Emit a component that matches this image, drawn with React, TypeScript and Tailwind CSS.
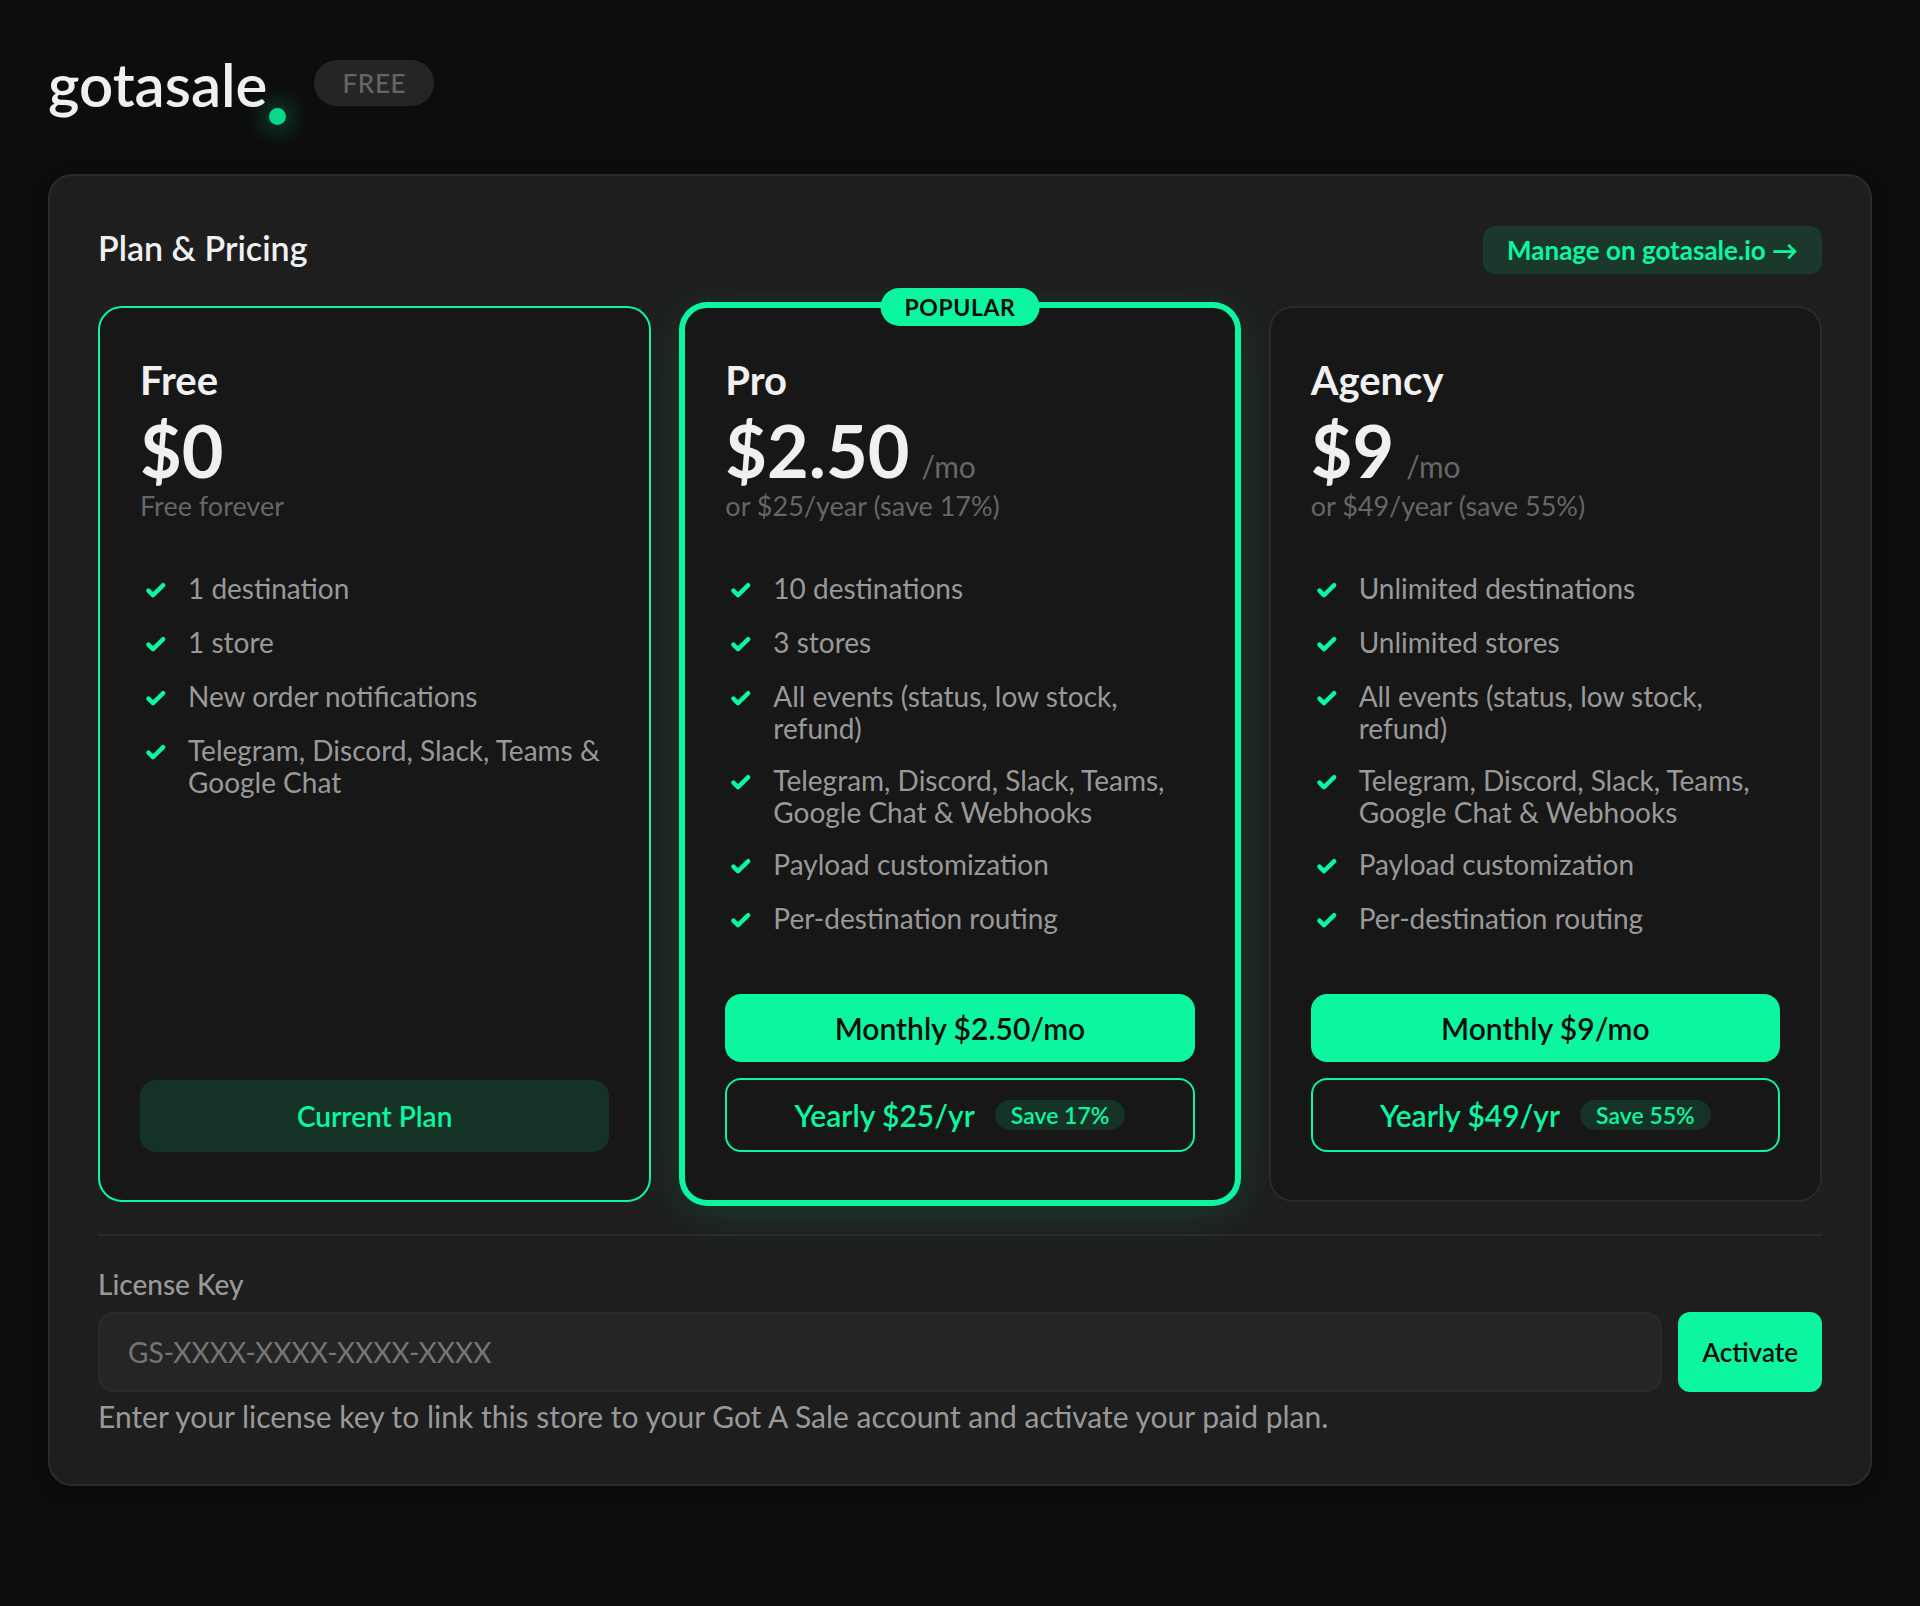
import clsx from "clsx";

type Plan = {
  name: string;
  price: string;
  period?: string;
  note: string;
  features: string[];
  monthly?: string;
  yearly?: string;
  save?: string;
  current?: boolean;
  popular?: boolean;
};

const paidFeatures = [
  "All events (status, low stock, refund)",
  "Telegram, Discord, Slack, Teams, Google Chat & Webhooks",
  "Payload customization",
  "Per-destination routing",
];

const plans: Plan[] = [
  {
    name: "Free",
    price: "$0",
    note: "Free forever",
    features: [
      "1 destination",
      "1 store",
      "New order notifications",
      "Telegram, Discord, Slack, Teams & Google Chat",
    ],
    current: true,
  },
  {
    name: "Pro",
    price: "$2.50",
    period: "/mo",
    note: "or $25/year (save 17%)",
    features: ["10 destinations", "3 stores", ...paidFeatures],
    monthly: "Monthly $2.50/mo",
    yearly: "Yearly $25/yr",
    save: "Save 17%",
    popular: true,
  },
  {
    name: "Agency",
    price: "$9",
    period: "/mo",
    note: "or $49/year (save 55%)",
    features: ["Unlimited destinations", "Unlimited stores", ...paidFeatures],
    monthly: "Monthly $9/mo",
    yearly: "Yearly $49/yr",
    save: "Save 55%",
  },
];

function Check() {
  return (
    <svg viewBox="0 0 32 34" className="w-8 h-[34px] shrink-0" fill="none" aria-hidden="true">
      <path
        d="M8.4 18.6 L13 23.1 L23.2 13.2"
        stroke="#0cf6a0"
        strokeWidth="4.4"
        strokeLinecap="round"
        strokeLinejoin="round"
      />
    </svg>
  );
}

function PlanCard({ plan }: { plan: Plan }) {
  return (
    <div
      className={clsx(
        "relative flex flex-col rounded-3xl border-2 bg-[#171717] px-10 py-12",
        plan.current || plan.popular ? "border-[#0cf6a0]" : "border-[#2a2a2a]",
        plan.popular && "shadow-[0_0_0_4px_#0cf6a0,0_8px_48px_rgba(12,246,160,0.15)]"
      )}
    >
      {plan.popular && (
        <span className="absolute -top-5 left-1/2 -translate-x-1/2 rounded-[20px] bg-[#0cf6a0] px-6 text-[23px] leading-[38px] font-bold tracking-wide text-[#0d0d0d]">
          POPULAR
        </span>
      )}
      <h3 className="mb-1 text-[40px] leading-[48px] font-bold text-[#f0f0f0]">{plan.name}</h3>
      <div className="flex items-baseline gap-3 leading-none">
        <span className="text-[72px] leading-[84px] font-bold text-[#f0f0f0]">{plan.price}</span>
        {plan.period && <span className="text-[30px] text-[#666]">{plan.period}</span>}
      </div>
      <p className="text-[27px] leading-[28px] text-[#666]">{plan.note}</p>

      <ul className="mt-[52px] mb-[58px] flex-1 space-y-5">
        {plan.features.map((f) => (
          <li key={f} className="flex min-h-[34px] items-start gap-4 text-[28px] leading-8 text-[#999]">
            <Check />
            <span>{f}</span>
          </li>
        ))}
      </ul>

      {plan.current ? (
        <button className="h-[72px] rounded-2xl bg-[#0cf6a0]/12 text-[28px] font-semibold text-[#0cf6a0]">
          Current Plan
        </button>
      ) : (
        <div className="flex flex-col gap-4">
          <button className="h-[68px] rounded-2xl bg-[#0cf6a0] text-[30px] font-semibold text-[#0d0d0d]">
            {plan.monthly}
          </button>
          <button className="flex h-[74px] items-center justify-center gap-5 rounded-2xl border-2 border-[#0cf6a0] text-[30px] font-semibold text-[#0cf6a0]">
            {plan.yearly}
            <span className="rounded-2xl bg-[#0cf6a0]/12 px-4 text-[23px] leading-[30px]">
              {plan.save}
            </span>
          </button>
        </div>
      )}
    </div>
  );
}

export default function App() {
  return (
    <div className="min-h-screen bg-[#0d0d0d] px-12 pt-[60px] pb-30 font-['Lato',sans-serif]">
      <header className="mb-12 flex h-[66px] items-start">
        <span className="text-[60px] leading-[48px] font-semibold text-[#f0f0f0]">gotasale</span>
        <span className="mt-12 ml-0.5 size-[17px] rounded-full bg-[#0ad787] shadow-[0_0_24px_2px_rgba(12,246,160,0.5)]" />
        <span className="ml-7 rounded-full bg-[#252525] px-7 text-[26px] leading-[46px] font-medium tracking-wide text-[#666]">
          FREE
        </span>
      </header>

      <main className="rounded-3xl border-2 border-[#2a2a2a] bg-[#1e1e1e] px-12 pt-[50px] pb-12 shadow-[0_4px_16px_rgba(0,0,0,0.4)]">
        <div className="mb-8 flex items-start justify-between">
          <h2 className="text-[34px] leading-[44px] font-semibold text-[#f0f0f0]">Plan &amp; Pricing</h2>
          <a
            href="#manage"
            className="rounded-xl bg-[#0cf6a0]/12 px-6 text-[26px] leading-[48px] font-bold text-[#0cf6a0]"
          >
            Manage on gotasale.io →
          </a>
        </div>

        <div className="grid grid-cols-3 gap-8">
          {plans.map((plan) => (
            <PlanCard key={plan.name} plan={plan} />
          ))}
        </div>

        <form className="mt-8 border-t-2 border-[#2a2a2a] pt-8">
          <label htmlFor="license" className="mb-3 block text-[28px] leading-8 font-medium text-[#999]">
            License Key
          </label>
          <div className="flex gap-4">
            <input
              id="license"
              type="text"
              placeholder="GS-XXXX-XXXX-XXXX-XXXX"
              className="h-20 min-w-0 flex-1 rounded-2xl border-2 border-[#2a2a2a] bg-[#252525] px-7 text-[28px] text-[#f0f0f0] placeholder:text-[#757575]"
            />
            <button
              type="button"
              className="rounded-xl bg-[#0cf6a0] px-6 text-[26px] font-semibold text-[#0d0d0d]"
            >
              Activate
            </button>
          </div>
          <p className="mt-1 text-[30px] leading-10 text-[#999]">
            Enter your license key to link this store to your Got A Sale account and activate your paid plan.
          </p>
        </form>
      </main>
    </div>
  );
}
